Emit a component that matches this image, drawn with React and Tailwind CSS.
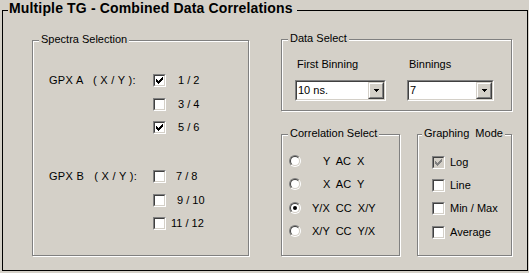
import React from 'react';

const CHECK_PATH =
  'M0 2h1v3h-1z M1 3h1v3h-1z M2 4h1v3h-1z M3 3h1v3h-1z M4 2h1v3h-1z M5 1h1v3h-1z M6 0h1v3h-1z';

const Check = ({ checked, disabled }) => (
  <div className="w-[13px] h-[13px] shrink-0 border border-[#808080] border-r-white border-b-white">
    <div
      className={`w-full h-full flex items-center justify-center border border-[#404040] border-r-[#d4d0c8] border-b-[#d4d0c8] ${
        disabled ? 'bg-[#d4d0c8]' : 'bg-white'
      }`}
    >
      {checked && (
        <svg width="7" height="7" viewBox="0 0 7 7" shapeRendering="crispEdges">
          <path d={CHECK_PATH} fill={disabled ? '#808080' : '#000'} />
        </svg>
      )}
    </div>
  </div>
);

const Radio = ({ checked }) => (
  <div className="w-[12px] h-[12px] shrink-0 rounded-full border border-[#808080] border-r-white border-b-white">
    <div className="w-full h-full rounded-full flex items-center justify-center bg-white border border-[#404040] border-r-[#d4d0c8] border-b-[#d4d0c8]">
      {checked && <div className="w-[4px] h-[4px] rounded-full bg-black" />}
    </div>
  </div>
);

const Combo = ({ value, width }) => (
  <div className={`${width} h-[21px] border border-[#808080] border-r-white border-b-white`}>
    <div className="w-full h-full flex items-stretch bg-white border border-[#404040] border-r-[#d4d0c8] border-b-[#d4d0c8]">
      <span className="pl-[1px] leading-[17px]">{value}</span>
      <div className="ml-auto w-[16px] border border-[#d4d0c8] border-r-[#404040] border-b-[#404040]">
        <div className="w-full h-full flex items-center justify-center bg-[#d4d0c8] border border-white border-r-[#808080] border-b-[#808080]">
          <svg width="5" height="3" viewBox="0 0 5 3" shapeRendering="crispEdges">
            <path d="M0 0h5v1h-5z M1 1h3v1h-3z M2 2h1v1h-1z" fill="#000" />
          </svg>
        </div>
      </div>
    </div>
  </div>
);

const GroupBox = ({ label, labelLeft = 'left-[6px]', className, children }) => (
  <div
    className={`relative border border-[#808080] shadow-[inset_1px_1px_0_#fff,1px_1px_0_#fff] ${className}`}
  >
    <span
      className={`absolute ${labelLeft} top-[-8px] px-[2px] bg-[#d4d0c8] leading-[13px] whitespace-pre`}
    >
      {label}
    </span>
    {children}
  </div>
);

const spectraRows = [
  { group: 'GPX A   ( X / Y ):', label: '1 / 2', checked: true, mt: '', ml: 'ml-[12px]' },
  { label: '3 / 4', mt: 'mt-[11px]', ml: 'ml-[12px]' },
  { label: '5 / 6', checked: true, mt: 'mt-[10px]', ml: 'ml-[12px]' },
  { group: 'GPX B   ( X / Y ):', label: '7 / 8', mt: 'mt-[36px]', ml: 'ml-[10px]' },
  { label: '9 / 10', mt: 'mt-[11px]', ml: 'ml-[11px]' },
  { label: '11 / 12', mt: 'mt-[10px]', ml: 'ml-[5px]' },
];

const correlations = [
  { label: 'Y  AC  X', mt: '', ml: 'ml-[22px]' },
  { label: 'X  AC  Y', mt: 'mt-[11px]', ml: 'ml-[22px]' },
  { label: 'Y/X  CC  X/Y', checked: true, mt: 'mt-[12px]', ml: 'ml-[11px]' },
  { label: 'X/Y  CC  Y/X', mt: 'mt-[11px]', ml: 'ml-[11px]' },
];

const modes = [
  { label: 'Log', checked: true, disabled: true, mt: '' },
  { label: 'Line', mt: 'mt-[10px]' },
  { label: 'Min / Max', mt: 'mt-[10px]' },
  { label: 'Average', mt: 'mt-[11px]' },
];

export default function App() {
  return (
    <div className="w-[529px] h-[273px] bg-[#d4d0c8] pt-[10px] pl-[2px] text-[11px] text-black font-['Liberation_Sans',Arial,sans-serif] overflow-hidden">
      <div className="relative w-[526px] h-[261px] border border-black pl-[29px] pt-[29px] flex">
        <span className="absolute left-[5px] top-[-11px] pl-[1px] pr-[4px] bg-[#d4d0c8] text-[14px] leading-[16px] font-bold tracking-[0.15px] whitespace-nowrap">
          Multiple TG - Combined Data Correlations
        </span>

        {/* spectra */}
        <GroupBox label="Spectra Selection" className="w-[217px] h-[216px] shrink-0">
          <div className="pl-[16px] pt-[33px] flex flex-col">
            {spectraRows.map((r) => (
              <div key={r.label} className={`flex items-center h-[13px] ${r.mt}`}>
                <span className="w-[104px] shrink-0 whitespace-pre tracking-[0.3px] leading-[13px]">
                  {r.group || ''}
                </span>
                <Check checked={r.checked} />
                <span className={`${r.ml} leading-[13px] whitespace-pre`}>{r.label}</span>
              </div>
            ))}
          </div>
        </GroupBox>

        <div className="ml-[32px] mt-[-1px] flex flex-col">
          <GroupBox label="Data Select" className="w-[231px] h-[72px]">
            <div className="pt-[18px] pl-[13px] flex gap-[21px]">
              <div className="flex flex-col">
                <span className="pl-[2px] leading-[13px]">First Binning</span>
                <div className="mt-[9px]">
                  <Combo value="10 ns." width="w-[91px]" />
                </div>
              </div>
              <div className="flex flex-col">
                <span className="pl-[2px] leading-[13px]">Binnings</span>
                <div className="mt-[9px]">
                  <Combo value="7" width="w-[87px]" />
                </div>
              </div>
            </div>
          </GroupBox>

          <div className="mt-[23px] flex gap-[17px]">
            <GroupBox label="Correlation Select" className="w-[119px] h-[122px]">
              <div className="pl-[7px] pt-[20px] flex flex-col">
                {correlations.map((c) => (
                  <div key={c.label} className={`flex items-center h-[12px] ${c.mt}`}>
                    <Radio checked={c.checked} />
                    <span className={`${c.ml} leading-[13px] whitespace-pre`}>{c.label}</span>
                  </div>
                ))}
              </div>
            </GroupBox>

            <GroupBox label="Graphing  Mode" labelLeft="left-[4px]" className="w-[95px] h-[122px]">
              <div className="pl-[14px] pt-[21px] flex flex-col">
                {modes.map((m) => (
                  <div key={m.label} className={`flex items-center h-[13px] ${m.mt}`}>
                    <Check checked={m.checked} disabled={m.disabled} />
                    <span className="ml-[5px] leading-[13px] whitespace-pre">{m.label}</span>
                  </div>
                ))}
              </div>
            </GroupBox>
          </div>
        </div>
      </div>
    </div>
  );
}
